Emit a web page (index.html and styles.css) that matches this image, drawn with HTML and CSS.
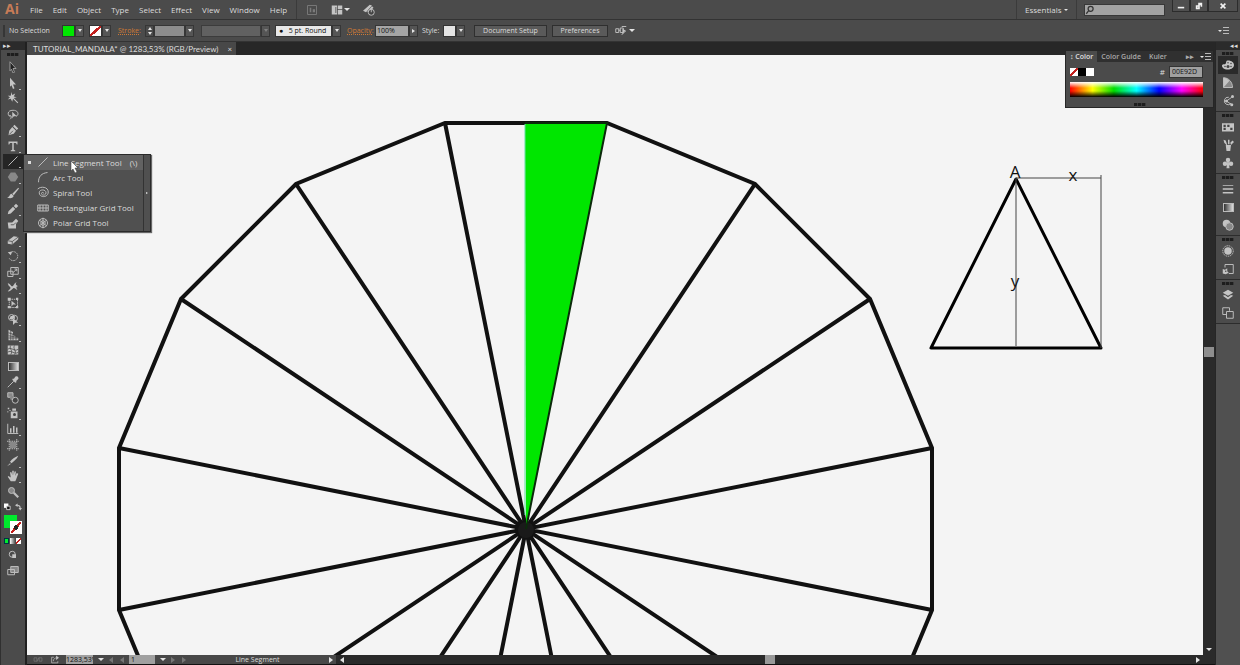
FILE: index.html
```html
<!DOCTYPE html>
<html lang="en">
  <head>
    <meta charset="UTF-8" />
    <meta name="viewport" content="width=device-width, initial-scale=1.0" />
    <title>TUTORIAL_MANDALA</title>
    <link rel="stylesheet" href="styles.css">
  </head>
  <body>
    <div class="app">
      <!-- menu bar -->
      <header class="menubar">
        <span class="logo">Ai</span>
        <nav class="menus">
          <button>File</button>
          <button>Edit</button>
          <button>Object</button>
          <button>Type</button>
          <button>Select</button>
          <button>Effect</button>
          <button>View</button>
          <button>Window</button>
          <button>Help</button>
        </nav>
        <div class="apps">
          <button aria-label="Bridge"><svg class="icon dim" viewBox="0 0 16 16"><path d="M2 2h12v12H2z" class="ln"/><path d="M5 5h2v6H5zM9 7h3v4H9z"/></svg></button>
          <button class="arrange" aria-label="Arrange documents"><svg class="icon" viewBox="0 0 16 16"><path d="M1 2h7v12H1zM9 2h6v5H9zM9 8h6v6H9z"/><path d="M6 4h1v8H6z" class="hole"/></svg><i class="tri"></i></button>
          <button aria-label="GPU performance"><svg class="icon" viewBox="0 0 16 16"><path d="M0 9 9 1l3 1-8 9zM5 11l7-8 2 2-3 3z"/><circle cx="11" cy="11" r="4" class="hole"/><circle cx="11" cy="11" r="4" class="ln"/><path d="M11 6v5" class="ln"/></svg></button>
        </div>
        <div class="workspace">
          <select aria-label="Workspace"><option>Essentials</option></select>
          <i class="tri"></i>
        </div>
        <label class="search">
          <svg class="icon" viewBox="0 0 16 16"><circle cx="9" cy="6" r="4"/><path d="M6 9l-4 5"/></svg>
          <input type="search" aria-label="Search">
        </label>
        <div class="winbtns">
          <button aria-label="Minimize"><svg viewBox="0 0 10 10"><path d="M1 6h8v2H1z"/></svg></button>
          <button aria-label="Restore"><svg viewBox="0 0 10 10"><path d="M4 1h5v5H7V4H4zM1 4h5v5H1z"/><path d="M3 6h1v1H3z" class="hole"/></svg></button>
          <button class="close" aria-label="Close"><svg viewBox="0 0 10 10"><path d="M2 2l6 6M8 2L2 8" class="x"/></svg></button>
        </div>
      </header>

      <!-- control bar -->
      <div class="control">
        <i class="handle"></i>
        <span class="selection">No Selection</span>
        <div class="field swatches">
          <button class="chip green" aria-label="Fill"></button><button class="arrow" aria-label="Fill swatches"><i class="tri"></i></button>
        </div>
        <div class="field">
          <button class="chip none" aria-label="Stroke color"></button><button class="arrow" aria-label="Stroke swatches"><i class="tri"></i></button>
        </div>
        <a href="#" class="link">Stroke:</a>
        <div class="field weight">
          <button class="step" aria-label="Step weight"><i class="tri up"></i><i class="tri"></i></button>
          <input type="text" aria-label="Stroke weight"><button class="arrow" aria-label="Weight list"><i class="tri"></i></button>
        </div>
        <div class="field profile">
          <select aria-label="Width profile" disabled><option></option></select><i class="arrow"><i class="tri"></i></i>
        </div>
        <div class="field brush">
          <select aria-label="Brush"><option>●&nbsp;&nbsp;&nbsp;5 pt. Round</option></select><i class="arrow"><i class="tri"></i></i>
        </div>
        <a href="#" class="link opacity">Opacity:</a>
        <div class="field percent">
          <input type="text" aria-label="Opacity" value="100%"><button class="arrow" aria-label="Opacity slider"><i class="tri right"></i></button>
        </div>
        <span class="style">Style:</span>
        <div class="field">
          <button class="chip light" aria-label="Graphic style"></button><button class="arrow" aria-label="Graphic styles"><i class="tri"></i></button>
        </div>
        <div class="actions">
          <button class="setup">Document Setup</button>
          <button class="prefs">Preferences</button>
          <button class="bare" aria-label="Select similar"><svg class="icon" viewBox="0 0 16 16"><path d="M1 5h4v5H1zM7 4h4v6H7zM9 2h6M9 13l5-5M5 7h2" class="ln"/><path d="M10 5l5 3-3 1-2 4z"/></svg><i class="tri"></i></button>
        </div>
        <button class="bare flymenu" aria-label="Control menu"><i class="tri"></i><i class="lines"></i></button>
      </div>

      <div class="work">
        <!-- tools -->
        <aside class="toolbar">
          <button class="expand" aria-label="Expand tools">▸▸</button>
          <i class="grip"></i>
          <ul class="tools">
            <li><button aria-label="Selection"><svg class="icon" viewBox="0 0 16 16"><path d="M4 1l8 9H8l2 5-2 1-2-5-2 2z" class="sel"/></svg></button></li>
            <li class="more"><button aria-label="Direct selection"><svg class="icon" viewBox="0 0 16 16"><path d="M4 1l8 9H8l2 5-2 1-2-5-2 2z"/></svg></button></li>
            <li><button aria-label="Magic wand"><svg class="icon" viewBox="0 0 16 16"><path d="M6 0l1 4 4-2-2 4 4 1-4 1 6 6-1 1-6-6-1 4-2-4-4 1 3-3-3-2h4z"/></svg></button></li>
            <li><button aria-label="Lasso"><svg class="icon" viewBox="0 0 16 16"><path d="M5 12C0 10 0 3 8 3s8 7 4 8M3 10c3-1 4 3 1 5" class="ln"/><path d="M7 5l6 6H9l-2 3z"/></svg></button></li>
            <li class="more"><button aria-label="Pen"><svg class="icon" viewBox="0 0 16 16"><path d="M10 1l5 5-2 2-5-5zM7 4l5 5-3 4-7 2 1-6z"/><path d="M3 14l5-5" class="cut"/></svg></button></li>
            <li class="more"><button aria-label="Type"><svg class="icon" viewBox="0 0 16 16"><path d="M2 2h12v4h-1l-1-2H9v9l2 1v1H5v-1l2-1V4H4L3 6H2z"/></svg></button></li>
            <li class="more active">
              <button aria-label="Line segment"><svg class="icon" viewBox="0 0 16 16"><path d="M2 14L14 2" class="ln"/></svg></button>
              <div class="flyout">
                <ul>
                  <li class="current"><button><i class="dot"></i><svg class="icon" viewBox="0 0 16 16"><path d="M2 14L14 2" class="ln"/></svg><span>Line Segment Tool</span><kbd>(\)</kbd></button></li>
                  <li><button><i class="dot"></i><svg class="icon" viewBox="0 0 16 16"><path d="M2 15C2 7 6 3 14 2" class="ln"/></svg><span>Arc Tool</span></button></li>
                  <li><button><i class="dot"></i><svg class="icon" viewBox="0 0 16 16"><path d="M1 4c4-4 14-3 14 4 0 8-12 8-12 1 0-5 9-5 9 0 0 4-6 4-6 1 0-2 3-2 3 0" class="ln"/></svg><span>Spiral Tool</span></button></li>
                  <li><button><i class="dot"></i><svg class="icon" viewBox="0 0 16 16"><path d="M1 4h14v8H1zM1 8h14M4 4v8M8 4v8M12 4v8" class="ln"/></svg><span>Rectangular Grid Tool</span></button></li>
                  <li><button><i class="dot"></i><svg class="icon" viewBox="0 0 16 16"><path d="M3 4l10 8M13 4L3 12M8 1v14" class="ln"/><circle cx="8" cy="8" r="6" class="ln"/><circle cx="8" cy="8" r="3" class="ln"/></svg><span>Polar Grid Tool</span></button></li>
                </ul>
                <button class="tearoff" aria-label="Tear off"><i class="tri right"></i></button>
                <svg class="pointer" viewBox="0 0 9 13"><path d="M1 1v10l2-2 2 4 2-1-2-4h3z"/></svg>
              </div>
            </li>
            <li class="more"><button aria-label="Polygon"><svg class="icon" viewBox="0 0 16 16"><path d="M5 2h6l4 6-4 6H5L1 8z" class="mid"/></svg></button></li>
            <li><button aria-label="Paintbrush"><svg class="icon" viewBox="0 0 16 16"><path d="M15 1l1 1-7 9-2-2zM6 9l3 3c-2 4-6 3-9 2 4-1 3-4 6-5z"/></svg></button></li>
            <li class="more"><button aria-label="Pencil"><svg class="icon" viewBox="0 0 16 16"><path d="M12 1l3 3-3 3-3-3zM8 5l3 3-6 6-4 1 1-4z"/></svg></button></li>
            <li><button aria-label="Blob brush"><svg class="icon" viewBox="0 0 16 16"><path d="M1 6h6l5-5 3 3-3 4v6H2z"/><path d="M5 9h4l3-3" class="cut"/></svg></button></li>
            <li class="more"><button aria-label="Eraser"><svg class="icon" viewBox="0 0 16 16"><path d="M1 9l8-6 6 1v3l-8 7-6-1z"/><path d="M1 9l6 1 8-6M7 10v4" class="cut"/></svg></button></li>
            <li class="more"><button aria-label="Rotate"><svg class="icon" viewBox="0 0 16 16"><path d="M4 4a6 6 0 1 1-1 7" class="ln dash"/><path d="M1 3l6-1-2 5z"/></svg></button></li>
            <li class="more"><button aria-label="Scale"><svg class="icon" viewBox="0 0 16 16"><path d="M5 2h10v9H5zM1 7h7v7H1z" class="ln"/><path d="M8 9l5-5M10 4h3v3" class="ln"/></svg></button></li>
            <li class="more"><button aria-label="Width"><svg class="icon" viewBox="0 0 16 16"><path d="M1 3c4 1 4 4 6 4s3-6 6-5c-3 2 0 4 2 5-3 0-3 2-1 5-3-1-4-4-6-2s-4 4-7 4c2-3 5-4 3-6S2 6 1 3z"/></svg></button></li>
            <li><button aria-label="Free transform"><svg class="icon" viewBox="0 0 16 16"><path d="M3 3h11v11H3z" class="ln dash"/><path d="M1 1h4v4H1zM12 1h3v3h-3zM1 12h4v3H1zM12 12h3v3h-3zM6 5l6 5H8l-2 3z"/></svg></button></li>
            <li class="more"><button aria-label="Shape builder"><svg class="icon" viewBox="0 0 16 16"><circle cx="6" cy="6" r="4" class="ln"/><circle cx="10" cy="7" r="4" class="ln"/><path d="M3 8h7V4H5zM8 7l7 6h-4l-3 3z"/></svg></button></li>
            <li class="more"><button aria-label="Perspective grid"><svg class="icon" viewBox="0 0 16 16"><path d="M2 1l6 3v4l7 4v3H2z"/><path d="M5 2v13M8 6v9M12 9v6M2 5l6 2M2 9l12 2M2 12h13" class="cut"/></svg></button></li>
            <li><button aria-label="Mesh"><svg class="icon" viewBox="0 0 16 16"><path d="M1 2h14v12H1z"/><path d="M1 7c5-4 8 4 14 0M1 11c4-4 9 4 14 0M5 2c-3 5 4 6 0 12M10 2c-3 5 4 7 0 12" class="cut"/></svg></button></li>
            <li><button aria-label="Gradient"><span class="grad"></span></button></li>
            <li class="more"><button aria-label="Eyedropper"><svg class="icon" viewBox="0 0 16 16"><path d="M11 1c3-2 5 1 4 3l-3 3 1 1-2 1-4-4 1-2 1 1z"/><path d="M9 7l-6 6-2 2" class="ln"/></svg></button></li>
            <li><button aria-label="Blend"><svg class="icon" viewBox="0 0 16 16"><path d="M1 1h7v6H1z" class="mid"/><path d="M1 1h7v6H1z" class="ln"/><circle cx="7" cy="8" r="3" class="mid"/><circle cx="11" cy="11" r="4" class="hole"/><circle cx="11" cy="11" r="4" class="ln"/></svg></button></li>
            <li class="more"><button aria-label="Symbol sprayer"><svg class="icon" viewBox="0 0 16 16"><path d="M5 6h9v9H5zM7 2h5v3H7zM1 1h2v2H1zM3 4h2v1H3zM0 6h2v1H0z"/><circle cx="10" cy="10" r="2" class="hole"/></svg></button></li>
            <li class="more"><button aria-label="Column graph"><svg class="icon" viewBox="0 0 16 16"><path d="M1 1v13h14" class="ln"/><path d="M4 7h2v6H4zM8 4h2v9H8zM12 6h2v7h-2z"/></svg></button></li>
            <li><button aria-label="Artboard"><svg class="icon" viewBox="0 0 16 16"><path d="M4 4h8v8H4z" class="mid"/><path d="M0 3h16M0 13h16M3 0v16M13 0v16" class="ln dash"/></svg></button></li>
            <li class="more"><button aria-label="Slice"><svg class="icon" viewBox="0 0 16 16"><path d="M15 1c-2 5-6 7-9 10L4 9c3-4 6-6 11-8zM4 11l1 1-5 3z"/></svg></button></li>
            <li class="more"><button aria-label="Hand"><svg class="icon" viewBox="0 0 16 16"><path d="M5 15L1 9l1-1 3 2-1-7h2l1 4V1h2v6l1-5h2l-1 6 2-4 2 1-3 8-1 2z"/></svg></button></li>
            <li><button aria-label="Zoom"><svg class="icon" viewBox="0 0 16 16"><circle cx="6" cy="6" r="4" class="mid"/><circle cx="6" cy="6" r="4" class="ln"/><path d="M9 9l6 6" class="ln fat"/></svg></button></li>
          </ul>
          <div class="swap">
            <button aria-label="Default colors"><svg viewBox="0 0 8 8"><path d="M0 0h5v5H0z" fill="#fff"/><path d="M3 3h4v4H3z" fill="#111" stroke="#ddd"/></svg></button>
            <button aria-label="Swap colors"><svg viewBox="0 0 8 8"><path d="M2 2c3 0 4 1 4 4" class="ln"/><path d="M0 2l3-2v4zM4 5h4L6 8z"/></svg></button>
          </div>
          <div class="fillstroke">
            <button class="fill" aria-label="Fill color"></button>
            <button class="stroke" aria-label="Stroke color"></button>
          </div>
          <div class="modes">
            <button class="solid" aria-label="Color"></button>
            <button class="fade" aria-label="Gradient fill"></button>
            <button class="none" aria-label="None"></button>
          </div>
          <button class="view" aria-label="Drawing mode"><svg class="icon" viewBox="0 0 16 16"><circle cx="7" cy="7" r="4" class="ln"/><path d="M7 7h5v5H7z"/></svg></button>
          <button class="view" aria-label="Screen mode"><svg class="icon" viewBox="0 0 16 16"><path d="M5 2h10v8H5z" class="mid"/><path d="M5 2h10v8H5zM1 6h9v7H1z" class="ln"/></svg></button>
        </aside>

        <!-- document -->
        <main class="document">
          <div class="tabs">
            <div class="tab">TUTORIAL_MANDALA* @ 1283,53% (RGB/Preview)<button aria-label="Close tab">×</button></div>
          </div>
          <div class="stage">
            <svg class="canvas" viewBox="27 55 1176 600" preserveAspectRatio="xMinYMin slice">
              <g class="mandala">
                <path d="M445 123H607L755 184 870 299 932 448V610L870 759 755 874 607 935H445L296 874 181 759 119 610V448L181 299 296 184Z"/>
                <path d="M445 123L607 935M296 184L755 874M181 299L870 759M119 448L932 610M119 610L932 448M181 759L870 299M296 874L755 184M445 935L526 529"/>
                <circle cx="526" cy="530" r="8"/>
              </g>
              <path class="wedge" d="M525 123H607L526 529Z"/>
              <path class="wedge-edge" d="M525 123H607L526 529"/>
              <path class="wedge-side" d="M525 124V515"/>
              <path class="triangle" d="M1016 179L931 348H1101Z"/>
              <path class="guides" d="M1016 178H1101M1101 175V348M1016 178V346"/>
              <g class="labels">
                <text x="1015" y="178">A</text>
                <text x="1073" y="181">x</text>
                <text x="1015" y="287">y</text>
              </g>
            </svg>
            <div class="vscroll"><i class="thumb"></i><i class="tri"></i></div>
          </div>
          <footer class="status">
            <div class="info">
              <svg class="icon dim" viewBox="0 0 16 16"><path d="M1 5h5v6H1zM10 5h5v6h-5zM6 12l4-8" class="ln"/></svg>
              <svg class="icon" viewBox="0 0 16 16"><path d="M6 4H2v10h11v-3M5 11c0-4 3-6 6-6" class="ln"/><path d="M10 1l5 4-5 4z"/></svg>
              <input class="zoom" type="text" aria-label="Zoom" value="1283,53%"><button aria-label="Zoom levels"><i class="tri"></i></button>
              <span class="nav"><i class="tri left"></i><i class="tri left"></i></span>
              <input class="board" type="text" aria-label="Artboard number" value="1"><button aria-label="Artboards"><i class="tri"></i></button>
              <span class="nav"><i class="tri right"></i><i class="tri right"></i></span>
              <span class="toolname">Line Segment</span>
              <button aria-label="Status options"><i class="tri right"></i></button>
            </div>
            <div class="hscroll"><i class="tri left"></i><i class="thumb"></i><i class="tri right"></i></div>
          </footer>

          <section class="panel">
            <div class="ptabs">
              <button class="on">↕ Color</button>
              <button>Color Guide</button>
              <button>Kuler</button>
              <span class="ptools">▸▸</span>
              <button class="bare flymenu" aria-label="Panel menu"><i class="tri"></i><i class="lines"></i></button>
            </div>
            <div class="pbody">
              <div class="prow">
                <button class="sw none" aria-label="None"></button><button class="sw black" aria-label="Black"></button><button class="sw white" aria-label="White"></button>
                <label for="hex">#</label>
                <input id="hex" type="text" value="00E92D">
              </div>
              <div class="spectrum"></div>
            </div>
            <i class="grip"></i>
          </section>
        </main>

        <!-- panel dock -->
        <aside class="dock">
          <button class="expand" aria-label="Expand panels">◂◂</button>
          <div class="group">
            <i class="grip"></i>
            <button class="on" aria-label="Color"><svg class="icon" viewBox="0 0 16 16"><path d="M8 2c5 0 8 3 8 6s-3 6-8 6c-6 0-8-3-8-5 0-3 4-1 5-3s0-4 3-4z"/><g class="hole"><circle cx="8" cy="5" r="1"/><circle cx="12" cy="6" r="1"/><circle cx="12" cy="10" r="1"/><circle cx="8" cy="10" r="2"/><circle cx="4" cy="10" r="1"/></g></svg></button>
            <button aria-label="Color guide"><svg class="icon" viewBox="0 0 16 16"><path d="M2 1c7 0 12 6 12 13H2z" class="mid"/><path d="M2 1c3 0 6 2 8 4l-8 9z"/><path d="M2 1c7 0 12 6 12 13H2z" class="ln"/></svg></button>
            <button aria-label="Kuler"><svg class="icon" viewBox="0 0 16 16"><path d="M12 11a5 5 0 1 1-3-8M6 8l7-5M6 8l7 5" class="ln"/><circle cx="6" cy="8" r="2"/><circle cx="14" cy="2" r="2"/><circle cx="13" cy="13" r="2"/></svg></button>
          </div>
          <div class="group">
            <i class="grip"></i>
            <button aria-label="Swatches"><svg class="icon" viewBox="0 0 16 16"><path d="M0 3h16v11H0z"/><path d="M2 5h3v3H2zM7 5h3v3H7zM2 9h3v3H2zM11 9h3v3h-3z" class="hole"/></svg></button>
            <button aria-label="Brushes"><svg class="icon" viewBox="0 0 16 16"><path d="M5 8h7l-1 8H6zM2 1l3 1 2 6H6L3 5zM8 1h2v6H8zM11 5l3-3 2 2-4 4z"/></svg></button>
            <button aria-label="Symbols"><svg class="icon" viewBox="0 0 16 16"><circle cx="8" cy="4" r="3"/><circle cx="4" cy="9" r="3"/><circle cx="12" cy="9" r="3"/><path d="M7 6h2l1 9H6z"/></svg></button>
          </div>
          <div class="group">
            <i class="grip"></i>
            <button aria-label="Stroke"><svg class="icon" viewBox="0 0 16 16"><path d="M1 3h14v1H1zM1 7h14v2H1zM1 12h14v2H1z"/></svg></button>
            <button aria-label="Gradient"><span class="grad"></span></button>
            <button aria-label="Transparency"><svg class="icon" viewBox="0 0 16 16"><circle cx="6" cy="6" r="5"/><circle cx="10" cy="10" r="5" class="mid"/><circle cx="10" cy="10" r="5" class="ln"/></svg></button>
          </div>
          <div class="group">
            <i class="grip"></i>
            <button aria-label="Appearance"><svg class="icon" viewBox="0 0 16 16"><circle cx="8" cy="8" r="5"/><circle cx="8" cy="8" r="7" class="ln dash"/></svg></button>
            <button aria-label="Graphic styles"><svg class="icon" viewBox="0 0 16 16"><path d="M4 6V2h11v12H9" class="ln"/><path d="M1 8l3 1 3-2v4l2 2-4 2-4-1z" /><circle cx="5" cy="11" r="1" class="hole"/></svg></button>
          </div>
          <div class="group">
            <i class="grip"></i>
            <button aria-label="Layers"><svg class="icon" viewBox="0 0 16 16"><path d="M8 1l7 4-7 4-7-4zM1 9l3-1 4 3 4-3 3 1-7 5z"/></svg></button>
            <button aria-label="Artboards"><svg class="icon" viewBox="0 0 16 16"><path d="M6 10H1V1h9v4M6 6h9v9H6z" class="ln"/></svg></button>
          </div>
        </aside>
      </div>
    </div>
  </body>
</html>
```
FILE: styles.css
```css
* {
  box-sizing: border-box;
  margin: 0;
  padding: 0;
}
body {
  font-family: "Open Sans", "Noto Sans", sans-serif;
  font-size: 8px;
  color: #dcdcdc;
  background-color: #1c1c1c;
}
ul {
  list-style: none;
}
button,
input,
select {
  font: inherit;
  color: inherit;
  border: 0;
  border-radius: 0;
  background: none;
  appearance: none;
  min-width: 0;
}
button {
  display: flex;
  align-items: center;
  justify-content: center;
  white-space: nowrap;
}
.app {
  display: flex;
  flex-direction: column;
  height: 100vh;
  overflow: hidden;
}

/* icons */
svg {
  fill: #c4c4c4;
}
.icon {
  display: block;
  flex: none;
  width: 12px;
  height: 12px;
}
.ln {
  fill: none;
  stroke: #bdbdbd;
  stroke-width: 1.3;
}
.fat {
  stroke-width: 3;
}
.dash {
  stroke-dasharray: 2 1;
}
.mid {
  fill: #888;
}
.hole {
  fill: #444;
}
.cut {
  fill: none;
  stroke: #444;
}
.sel {
  fill: #222;
  stroke: #b5b5b5;
}
.dim {
  opacity: 0.4;
}
.tri {
  display: block;
  flex: none;
  border: 3px solid transparent;
  border-top-color: #e4e4e4;
  border-bottom-width: 0;
}
.tri.up {
  border-width: 0 3px 3px;
  border-bottom-color: #e4e4e4;
}
.tri.right {
  border-width: 3px 0 3px 4px;
  border-color: transparent;
  border-left-color: #e4e4e4;
}
.tri.left {
  border-width: 3px 4px 3px 0;
  border-color: transparent;
  border-right-color: #e4e4e4;
}
.grip {
  display: block;
  width: 12px;
  height: 3px;
  margin: 0 auto;
  background: repeating-linear-gradient(90deg, #1d1d1d 0 3px, #3a3a3a 3px 4px);
}
.grad {
  width: 11px;
  height: 9px;
  border: 1px solid #bbb;
  background: linear-gradient(90deg, #333, #ddd);
}
.none {
  background: linear-gradient(to bottom left, #fff 42%, #c3201e 42% 58%, #fff 58%);
  background: linear-gradient(to bottom right, #fff 42%, #c3201e 42% 58%, #fff 58%);
}

/* menu bar */
.menubar {
  display: flex;
  flex: none;
  height: 20px;
  background-color: #4b4b4b;
  border-bottom: 1px solid #333;
}
.logo {
  width: 25px;
  padding-left: 5px;
  font-size: 14px;
  font-weight: bold;
  line-height: 18px;
  color: #c77c57;
}
.menus {
  display: flex;
  align-items: center;
  gap: 10px;
  padding: 0 9px 0 5px;
  border-right: 1px solid #3b3b3b;
}
.apps {
  display: flex;
  align-items: center;
  gap: 13px;
  padding-left: 9px;
}
.arrange {
  gap: 1px;
}
.workspace {
  display: flex;
  align-items: center;
  margin-left: auto;
  padding: 0 8px;
  border-left: 1px solid #3b3b3b;
  border-right: 1px solid #3b3b3b;
}
.workspace select {
  width: 39px;
}
.workspace .tri {
  border-width: 2px 2px 0;
}
.search {
  display: flex;
  align-items: center;
  align-self: center;
  width: 81px;
  height: 12px;
  margin: 0 7px;
  border: 1px solid #383838;
  background-color: #a3a3a3;
}
.search .icon {
  fill: none;
  stroke: #333;
  stroke-width: 2;
  width: 10px;
  height: 10px;
}
.search input {
  width: 65px;
}
.winbtns {
  display: flex;
  height: 12px;
  margin-right: 2px;
}
.winbtns button {
  width: 18px;
  border: 1px solid #2c2c2c;
  border-top: 0;
  background-color: #4f4f4f;
}
.winbtns .close {
  width: 30px;
}
.winbtns svg {
  width: 8px;
  height: 8px;
  fill: #f2f2f2;
}
.winbtns .x {
  stroke: #f2f2f2;
  stroke-width: 2;
}

/* control bar */
.control {
  display: flex;
  flex: none;
  align-items: center;
  height: 22px;
  padding: 0 11px 0 3px;
  font-size: 7px;
  background-color: #4b4b4b;
  border-bottom: 1px solid #333;
}
.handle {
  width: 2px;
  height: 12px;
  background-color: #363636;
}
.selection {
  width: 57px;
  padding-left: 4px;
}
.field {
  display: flex;
  height: 12px;
  margin-right: 7px;
}
.swatches {
  margin-right: 5px;
}
.chip {
  width: 13px;
  border: 1px solid #333;
}
.green {
  background-color: #00e600;
}
.light {
  background-color: #e4e4e4;
}
.arrow {
  display: flex;
  align-items: center;
  justify-content: center;
  width: 9px;
  border: 1px solid #363636;
  background-color: #555;
}
.arrow .tri {
  border-left-width: 2px;
  border-right-width: 2px;
}
.arrow .tri.right {
  border-width: 2px 0 2px 3px;
}
.link {
  width: 27px;
  color: #d07a35;
  text-decoration: underline dotted;
}
.step {
  flex-direction: column;
  gap: 2px;
  width: 9px;
  border: 1px solid #363636;
}
.step .tri {
  border-left-width: 2px;
  border-right-width: 2px;
}
.weight input {
  width: 31px;
  border: 1px solid #363636;
  background-color: #8d8d8d;
}
.profile select {
  width: 60px;
  border: 1px solid #363636;
  background-color: #6b6b6b;
}
.profile .tri {
  opacity: 0.3;
}
.profile {
  margin-right: 5px;
}
.brush {
  margin-right: 6px;
}
.brush select {
  width: 57px;
  padding-left: 3px;
  color: #111;
  border: 1px solid #363636;
  background-color: #e8e8e8;
}
.opacity {
  width: 28px;
}
.percent {
  margin-right: 4px;
}
.percent input {
  width: 34px;
  padding-left: 1px;
  color: #111;
  border: 1px solid #363636;
  background-color: #a5a5a5;
}
.style {
  width: 21px;
}
.actions {
  display: flex;
  gap: 5px;
  height: 12px;
  margin-left: 2px;
}
.setup,
.prefs {
  border: 1px solid #2f2f2f;
  background-color: #5a5a5a;
}
.setup {
  width: 73px;
}
.prefs {
  width: 56px;
}
.bare {
  gap: 2px;
  margin-left: 2px;
}
.flymenu {
  gap: 1px;
  margin-left: auto;
}
.flymenu .tri {
  border-width: 2px 2px 0;
}
.lines {
  width: 6px;
  height: 7px;
  background: repeating-linear-gradient(#bbb 0 1px, transparent 1px 3px);
}

/* work area */
.work {
  display: flex;
  flex: 1;
  min-height: 0;
}
.toolbar {
  flex: none;
  width: 27px;
  border-left: 1px solid #303030;
  border-right: 2px solid #202020;
  background-color: #4b4b4b;
}
.expand {
  width: 100%;
  height: 8px;
  padding: 0 2px;
  justify-content: flex-start;
  font-size: 7px;
  line-height: 8px;
  background-color: #2b2b2b;
}
.toolbar > .grip {
  margin: 3px auto;
}
.tools {
  display: grid;
  grid-auto-rows: 1fr;
  height: 441px;
}
.tools > li {
  position: relative;
}
.tools > li > button {
  width: 20px;
  height: 100%;
  margin: 0 2px;
}
.more::after {
  content: "";
  position: absolute;
  right: 4px;
  bottom: 1px;
  border: 1px solid #bbb;
  border-top: 0;
}
.active > button {
  background-color: #252525;
}
.flyout {
  position: absolute;
  top: 0;
  left: 22px;
  z-index: 2;
  display: flex;
  width: 128px;
  border: 1px solid #2a2a2a;
  box-shadow: 1px 1px 1px #666;
  background-color: #505050;
}
.flyout ul {
  display: grid;
  grid-auto-rows: 1fr;
  flex: 1;
  height: 76px;
}
.flyout li {
  display: flex;
}
.flyout li button {
  flex: 1;
  justify-content: flex-start;
  padding-left: 4px;
}
.flyout .icon {
  margin: 0 4px 0 6px;
}
.flyout kbd {
  margin-left: 8px;
  font: inherit;
}
.flyout .dot {
  width: 3px;
  height: 3px;
}
.flyout .current {
  background-color: #626262;
}
.current .dot {
  background-color: #ddd;
}
.tearoff {
  width: 7px;
  border-left: 1px solid #333;
}
.tearoff .tri.right {
  border-width: 1px 0 1px 2px;
}
.pointer {
  position: absolute;
  top: 5px;
  left: 46px;
  width: 9px;
  height: 13px;
  fill: #fff;
  stroke: #333;
  stroke-width: 0.5;
}
.swap {
  display: flex;
  justify-content: space-between;
  padding: 3px 3px 0;
}
.swap svg {
  width: 7px;
  height: 8px;
}
.fillstroke {
  display: grid;
  grid-template: 6px 7px 6px / 6px 7px 5px;
  margin: 4px 0 0 3px;
}
.fill {
  grid-area: 1 / 1 / 3 / 3;
  background-color: #00e92d;
}
.stroke {
  grid-area: 2 / 2 / 4 / 4;
  border: 1px solid #fff;
  background: radial-gradient(#222 0 2px, transparent 2px), linear-gradient(to bottom right, #fff 42%, #c3201e 42% 58%, #fff 58%);
}
.modes {
  display: flex;
  gap: 1px;
  margin: 4px 0 3px 3px;
}
.modes button {
  width: 5px;
  height: 6px;
}
.solid {
  border: 1px solid #034;
  background-color: #00e92d;
}
.fade {
  background: linear-gradient(90deg, #fff, #555);
}
.view {
  width: 100%;
  height: 16px;
}

/* document */
.document {
  position: relative;
  display: flex;
  flex: 1;
  flex-direction: column;
  min-width: 0;
}
.tabs {
  display: flex;
  flex: none;
  height: 13px;
  background-color: #272727;
}
.tab {
  display: flex;
  align-items: center;
  gap: 9px;
  padding: 0 4px 0 6px;
  font-family: Lato, "Open Sans", sans-serif;
  background-color: #484848;
}
.stage {
  display: flex;
  flex: 1;
  min-height: 0;
}
.canvas {
  flex: 1;
  min-width: 0;
  height: 100%;
  background-color: #f4f4f4;
}
.mandala {
  fill: none;
  stroke: #111;
  stroke-width: 4;
}
.mandala circle {
  fill: #1a1a1a;
  stroke: none;
}
.wedge {
  fill: #00e600;
}
.wedge-edge {
  fill: none;
  stroke: #0b2a0b;
  stroke-width: 2;
}
.wedge-side {
  stroke: #5fe0a0;
}
.triangle {
  fill: none;
  stroke: #000;
  stroke-width: 3;
  stroke-linejoin: round;
}
.guides {
  fill: none;
  stroke: #444;
}
.labels {
  font-size: 17px;
  text-anchor: middle;
  fill: #111;
}
.vscroll {
  display: flex;
  flex: none;
  flex-direction: column;
  align-items: center;
  width: 12px;
  padding-bottom: 4px;
  background-color: #2a2a2a;
}
.vscroll .thumb {
  width: 10px;
  height: 10px;
  margin: auto 0;
  background-color: #8e8e8e;
}
.status {
  display: flex;
  flex: none;
  height: 10px;
  font-size: 7px;
  border-bottom: 1px solid #111;
  background-color: #2a2a2a;
}
.info {
  display: flex;
  align-items: center;
  width: 309px;
  gap: 5px;
  padding: 0 3px 0 5px;
  overflow: hidden;
  background-color: #484848;
}
.info .icon {
  height: 9px;
}
.info input {
  height: 9px;
  color: #111;
  background-color: #a0a0a0;
}
.zoom {
  width: 27px;
}
.board {
  width: 26px;
  padding-left: 2px;
}
.nav {
  display: flex;
  gap: 7px;
  opacity: 0.3;
}
.toolname {
  flex: 1;
  text-align: center;
}
.hscroll {
  display: flex;
  flex: 1;
  align-items: center;
  justify-content: space-between;
  padding: 0 15px 0 4px;
}
.hscroll .thumb {
  width: 10px;
  height: 9px;
  background-color: #999;
}

/* color panel */
.panel {
  position: absolute;
  top: 8px;
  right: 1px;
  width: 149px;
  height: 58px;
  border: 1px solid #262626;
  background-color: #4b4b4b;
}
.ptabs {
  display: flex;
  height: 11px;
  font-size: 7px;
  font-weight: 600;
  color: #aaa;
  background-color: #303030;
}
.ptabs button {
  padding: 0 4px;
}
.ptabs .on {
  color: #e0e0e0;
  background-color: #4b4b4b;
}
.ptools {
  margin-left: auto;
  line-height: 11px;
}
.ptabs .flymenu {
  margin-left: 4px;
  padding: 0 2px;
}
.pbody {
  padding: 3px 10px 0 4px;
}
.prow {
  display: flex;
  align-items: center;
  height: 13px;
}
.sw {
  width: 8px;
  height: 8px;
}
.black {
  background-color: #000;
}
.white {
  background-color: #fff;
}
.prow label {
  margin-left: auto;
}
.prow input {
  width: 34px;
  height: 12px;
  margin-left: 4px;
  padding-left: 2px;
  font-size: 7px;
  color: #111;
  border: 1px solid #333;
  background-color: #a0a0a0;
}
.spectrum {
  height: 15px;
  margin: 4px 0 6px;
  background: linear-gradient(#fff, transparent 40%, transparent 60%, #000),
    linear-gradient(90deg, #f00, #ff0 17%, #0d0 33%, #0ff 50%, #00f 67%, #f0f 84%, #f00);
}

/* dock */
.dock {
  flex: none;
  width: 25px;
  border-left: 1px solid #262626;
  background-color: #505050;
}
.dock .expand {
  justify-content: flex-end;
}
.group {
  padding: 2px 0 1px;
  border-bottom: 1px solid #2c2c2c;
  background-color: #4b4b4b;
}
.group .grip {
  margin-bottom: 1px;
}
.group button {
  width: 20px;
  height: 18px;
  margin: 0 auto;
}
.group .on {
  background-color: #2a2a2a;
}
```
